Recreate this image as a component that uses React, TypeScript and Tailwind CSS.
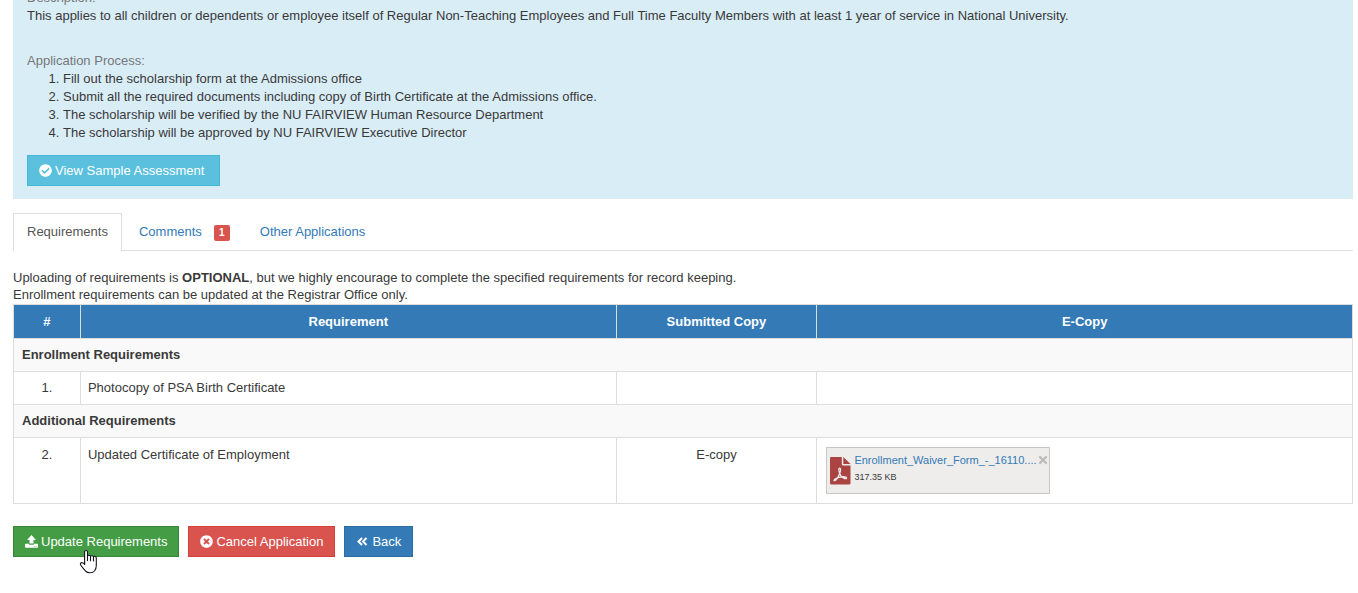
import type { ReactNode } from "react";
import { FaCheckCircle, FaTimes, FaTimesCircle } from "react-icons/fa";

const steps = [
  "Fill out the scholarship form at the Admissions office",
  "Submit all the required documents including copy of Birth Certificate at the Admissions office.",
  "The scholarship will be verified by the NU FAIRVIEW Human Resource Department",
  "The scholarship will be approved by NU FAIRVIEW Executive Director",
];

function ActionButton({ tone, icon, children }: { tone: string; icon: ReactNode; children: ReactNode }) {
  return (
    <button
      type="button"
      className={`inline-flex h-[31px] cursor-pointer items-center gap-[3px] border px-[11px] text-[13px] whitespace-nowrap text-white ${tone}`}
    >
      {icon}
      <span>{children}</span>
    </button>
  );
}

function Section({ title }: { title: string }) {
  return (
    <tr className="bg-[#f9f9f9]">
      <th colSpan={4} scope="colgroup" className="h-[33px] border border-[#ddd] px-2 text-left font-bold">
        {title}
      </th>
    </tr>
  );
}

function UploadIcon() {
  return (
    <svg aria-hidden="true" viewBox="0 0 13 13" className="size-[13px]" fill="currentColor">
      <path d="M6.500 0 11 4.900H8.500V8.600H4.500V4.900H2Z" />
      <path
        fillRule="evenodd"
        d="M.6 8.700H3.700Q3.900 9.800 4.800 9.800H8.200Q9.100 9.800 9.300 8.700H12.400Q13 8.700 13 9.300V12.100Q13 12.700 12.400 12.700H.6Q0 12.700 0 12.100V9.300Q0 8.700.6 8.700ZM8.700 10.900V11.700H9.500V10.900ZM10.700 10.900V11.700H11.500V10.900Z"
      />
    </svg>
  );
}

function BackIcon() {
  return (
    <svg
      aria-hidden="true"
      viewBox="0 0 13 13"
      className="size-[13px]"
      fill="none"
      stroke="currentColor"
      strokeWidth="2"
    >
      <path d="M6 3 2.500 6.500 6 10M10.500 3 7 6.500 10.500 10" />
    </svg>
  );
}

function PdfIcon() {
  return (
    <svg aria-hidden="true" viewBox="0 0 21 28" className="mt-[5px] h-7 w-[21px] shrink-0">
      <path
        fill="#a94442"
        d="M1.300 0H11.800V7.200Q11.800 8.400 13 8.400H20.500V26.200Q20.500 27.500 19.200 27.500H1.300Q0 27.500 0 26.200V1.300Q0 0 1.300 0ZM13.300 0 20.500 6.900H13.300Z"
      />
      <path
        fill="none"
        stroke="#eeedeb"
        strokeWidth="1.300"
        strokeLinejoin="round"
        d="M9.700 16.300C8.300 13.300 8.700 11.200 9.700 11.200S11.100 13.300 9.700 16.300C8.500 19.400 6.300 23.700 4.600 23.700 2.800 23.500 5.200 21.400 8.200 20.600 11.200 19.700 16.300 19.200 16.600 20.800 16.800 22.400 13.300 21.500 11.500 19.600Q10.300 18.300 9.700 16.300Z"
      />
    </svg>
  );
}

function PointerCursor() {
  return (
    <svg
      aria-hidden="true"
      viewBox="0 0 20 26"
      className="pointer-events-none absolute top-6 left-[66px] h-[26px] w-5"
      fill="#fff"
      stroke="#14141f"
      strokeWidth="1.1"
      strokeLinejoin="round"
      strokeLinecap="round"
    >
      <path d="M5.600 12.500V1.900c0-1.800 2.900-1.800 2.900 0v4c.5-1 2.700-.8 3 .3.600-.8 2.600-.6 2.900.5.700-.8 2.900-.4 2.900 1.200v7.600c0 3-.8 4.200-1.800 5.500-1.200 1.300-2.500 1.800-4.500 1.800s-3.500-.7-4.600-2c-1.200-1.300-3.900-4.300-4.700-5.700-.9-1.500.3-2.800 1.700-2.400.8.200 1.500.8 2.200 1.400Z" />
      <path d="M8.500 6v4.600M11.500 6.500v4.200M14.500 7v3.900M5.600 12.500v2" fill="none" />
    </svg>
  );
}

export default function App() {
  return (
    <main className="overflow-hidden bg-white pr-[5px] pb-9 pl-[13px] font-['Liberation_Sans',Arial,sans-serif] text-[13px] leading-[18px] text-[#393939]">
      <section className="-mt-[11px] bg-[#d9edf7] px-3.5 pb-[13px]">
        <h2 className="text-[#777]">Description:</h2>
        <p>
          This applies to all children or dependents or employee itself of Regular Non-Teaching Employees and Full Time
          Faculty Members with at least 1 year of service in National University.
        </p>
        <h2 className="mt-[27px] text-[#777]">Application Process:</h2>
        <ol className="mb-[13px] list-decimal pl-9">
          {steps.map((step) => (
            <li key={step}>{step}</li>
          ))}
        </ol>
        <ActionButton tone="border-[#46b8da] bg-[#5bc0de] min-w-[193px]" icon={<FaCheckCircle size={13} />}>
          View Sample Assessment
        </ActionButton>
      </section>

      <nav className="mt-3.5 flex h-[38px] border-b border-[#ddd]">
        <a
          href="#requirements"
          className="-mb-px flex items-center border border-b-0 border-[#ddd] bg-white px-[13px] pb-0.5 text-[#555]"
        >
          Requirements
        </a>
        <a href="#comments" className="ml-0.5 flex items-center gap-3 px-[15px] text-[#337ab7]">
          Comments
          <span className="mt-[3px] flex size-4 items-center justify-center rounded-xs bg-[#d9534f] text-[10px] font-bold text-white">
            1
          </span>
        </a>
        <a href="#other" className="flex items-center px-[15px] text-[#337ab7]">
          Other Applications
        </a>
      </nav>

      <p className="mt-[18px] mb-px leading-[17px]">
        Uploading of requirements is <strong>OPTIONAL</strong>, but we highly encourage to complete the specified
        requirements for record keeping.
        <br />
        Enrollment requirements can be updated at the Registrar Office only.
      </p>

      <table className="w-full table-fixed border-collapse border border-[#ddd]">
        <thead>
          <tr className="h-[34px] bg-[#337ab7] text-white">
            <th scope="col" className="w-[5%] border border-[#ddd] font-bold">#</th>
            <th scope="col" className="w-[40%] border border-[#ddd] font-bold">Requirement</th>
            <th scope="col" className="w-[15%] border border-[#ddd] font-bold">Submitted Copy</th>
            <th scope="col" className="w-[40%] border border-[#ddd] font-bold">E-Copy</th>
          </tr>
        </thead>
        <tbody>
          <Section title="Enrollment Requirements" />
          <tr className="h-[33px]">
            <td className="border border-[#ddd] text-center">1.</td>
            <td className="border border-[#ddd] px-[7px]">Photocopy of PSA Birth Certificate</td>
            <td className="border border-[#ddd]" />
            <td className="border border-[#ddd]" />
          </tr>
          <Section title="Additional Requirements" />
          <tr className="h-[66px] align-top">
            <td className="border border-[#ddd] pt-2 text-center">2.</td>
            <td className="border border-[#ddd] px-[7px] pt-2">Updated Certificate of Employment</td>
            <td className="border border-[#ddd] pt-2 text-center">E-copy</td>
            <td className="border border-[#ddd] px-[9px] pt-[9px]">
              <div className="flex h-[47px] w-56 border border-[#c9c7c6] bg-[#eeedeb] pt-1 pl-[3px]">
                <PdfIcon />
                <div className="ml-[3px] text-[9px] leading-[17px]">
                  <a href="#file" className="block text-[11px] whitespace-nowrap text-[#337ab7]">
                    Enrollment_Waiver_Form_-_16110....
                  </a>
                  <p>317.35 KB</p>
                </div>
                <button type="button" aria-label="Remove file" className="flex h-4 cursor-pointer items-center text-[#bbb]">
                  <FaTimes className="size-3" />
                </button>
              </div>
            </td>
          </tr>
        </tbody>
      </table>

      <div className="relative mt-[22px] flex gap-[9px]">
        <ActionButton tone="border-[#398439] bg-[#449d44]" icon={<UploadIcon />}>
          Update Requirements
        </ActionButton>
        <ActionButton tone="border-[#d43f3a] bg-[#d9534f]" icon={<FaTimesCircle size={13} />}>
          Cancel Application
        </ActionButton>
        <ActionButton tone="border-[#2e6da4] bg-[#337ab7]" icon={<BackIcon />}>
          Back
        </ActionButton>
        <PointerCursor />
      </div>
    </main>
  );
}
